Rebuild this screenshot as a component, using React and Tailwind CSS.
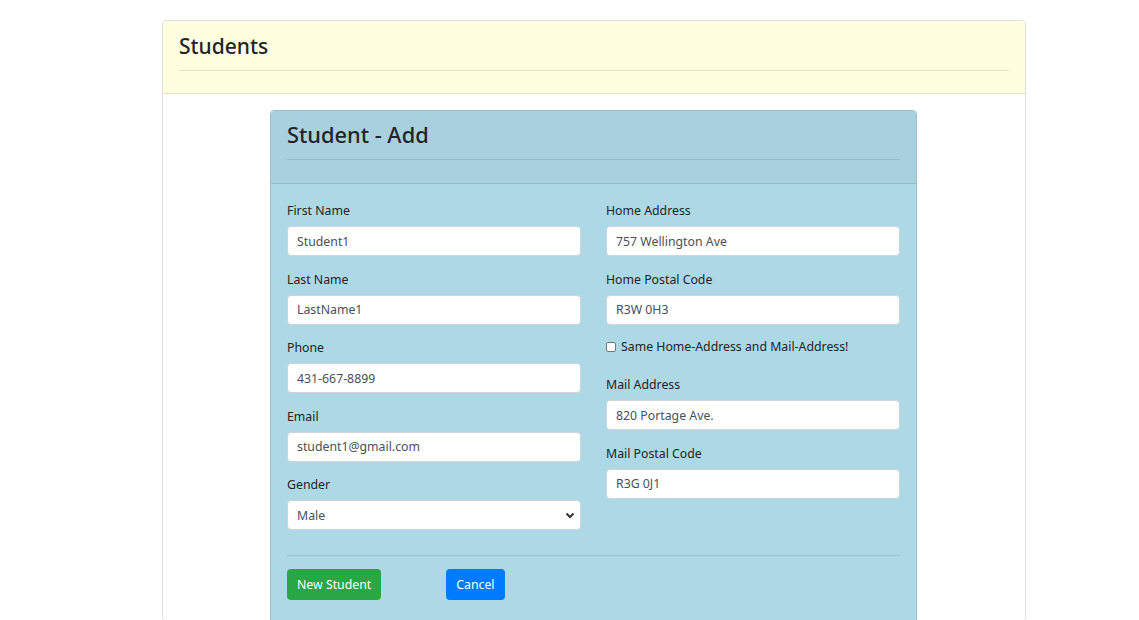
import React from "react";

const font = { fontFamily: '"Noto Sans", "Open Sans", Arial, sans-serif' };

function Label({ children }) {
  return <div className="h-[20px] leading-[20px] pt-[1px] text-[12.3px] text-[#212529] mb-[6px]">{children}</div>;
}

function Field({ label, value }) {
  return (
    <div className="mb-[12.5px]">
      <Label>{label}</Label>
      <div className="h-[30px] bg-white border border-[#ced4da] rounded-[4px] px-[9px] pt-[2px] flex items-center text-[12.3px] text-[#495057]">
        {value}
      </div>
    </div>
  );
}

export default function App() {
  return (
    <div className="min-h-[620px] bg-white pt-[20px]" style={font}>
      <div className="ml-[162px] w-[864px] border border-[#dfdfdf] rounded-[4px] overflow-hidden">
        <div className="bg-[#ffffe0] border-b border-[#e0e0c6] px-[16px] pt-[12px] h-[73px]">
          <div className="text-[21px] font-medium text-[#212529] leading-[26px]">Students</div>
          <div className="mt-[11px] border-t border-[#e3e3cd]"></div>
        </div>
        <div className="bg-white pt-[16px] h-[526px]">
          <div className="ml-[107px] w-[647px] border border-[#98c0cc] rounded-[4px] overflow-hidden">
            <div className="bg-[#a8d0de] border-b border-[#97bcc8] px-[16px] pt-[11px] h-[73px]">
              <div className="text-[21.8px] font-medium text-[#212529] leading-[26px]">Student - Add</div>
              <div className="mt-[11px] border-t border-[#97bdc9]"></div>
            </div>
            <div className="bg-[#add8e6] px-[16px] pt-[16px] pb-[40px]">
              <div className="grid grid-cols-2 gap-x-[25px]">
                <div>
                  <Field label="First Name" value="Student1" />
                  <Field label="Last Name" value="LastName1" />
                  <Field label="Phone" value="431-667-8899" />
                  <Field label="Email" value="student1@gmail.com" />
                  <div>
                    <Label>Gender</Label>
                    <div className="h-[30px] bg-white border border-[#ced4da] rounded-[4px] pl-[9px] pr-[4px] pt-[2px] flex items-center justify-between text-[12.3px] text-[#495057]">
                      <span>Male</span>
                      <svg width="12" height="12" viewBox="0 0 12 12" className="-mt-[2px]">
                        <path d="M2.5 4.5 L6 8 L9.5 4.5" fill="none" stroke="#333" strokeWidth="2" />
                      </svg>
                    </div>
                  </div>
                </div>
                <div>
                  <Field label="Home Address" value="757 Wellington Ave" />
                  <Field label="Home Postal Code" value="R3W 0H3" />
                  <div className="h-[20px] flex items-center text-[12.3px] text-[#212529] mt-[3px] pt-[1px]">
                    <span className="w-[10px] h-[10px] border border-[#767676] rounded-[2px] bg-white mr-[5px] -mt-[1px]"></span>
                    Same Home-Address and Mail-Address!
                  </div>
                  <div className="mt-[17px]">
                    <Field label="Mail Address" value="820 Portage Ave." />
                    <Field label="Mail Postal Code" value="R3G 0J1" />
                  </div>
                </div>
              </div>
              <div className="mt-[25px] border-t border-[#9cc2cf]"></div>
              <div className="flex mt-[13px]">
                <div className="h-[31px] px-[10px] pt-[2px] bg-[#28a745] rounded-[4px] text-white text-[12.3px] flex items-center">New Student</div>
                <div className="ml-[65px] h-[31px] px-[10px] pt-[2px] bg-[#007bff] rounded-[4px] text-white text-[12.3px] flex items-center">Cancel</div>
              </div>
            </div>
          </div>
        </div>
      </div>
    </div>
  );
}
